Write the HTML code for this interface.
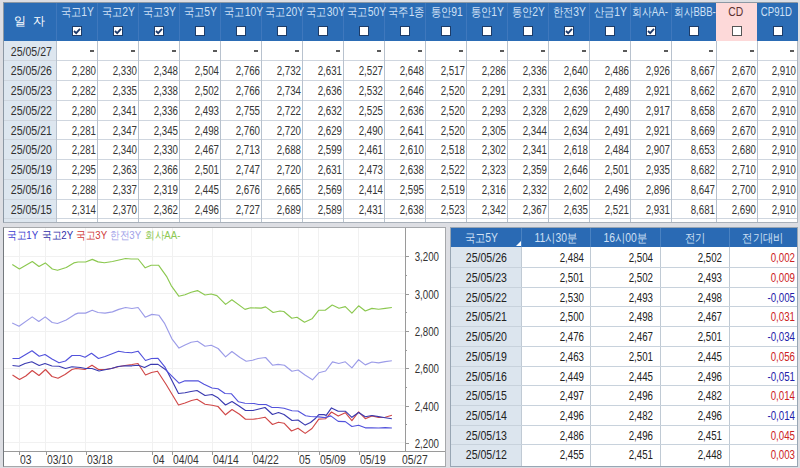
<!DOCTYPE html><html><head><meta charset="utf-8"><style>
*{margin:0;padding:0;box-sizing:border-box}
html,body{width:800px;height:468px;overflow:hidden;background:#dddee3;font-family:"Liberation Sans", sans-serif;position:relative}
.a{position:absolute}
.t{position:absolute;white-space:nowrap;font-size:12px;line-height:14px}
.r{text-align:right}
.c{text-align:center}
.s{display:inline-block;transform:scaleX(0.86)}
.sd{display:inline-block;transform:scaleX(0.88)}
.sr{display:inline-block;transform:scaleX(0.81);transform-origin:100% 50%}
.cb{position:absolute;width:10px;height:10px;background:#fff}

</style></head><body>
<div class="a" style="left:3px;top:2px;width:795px;height:221px;background:#fff;border:1px solid #8c98a4;border-right-color:#b0b8c0;border-bottom-color:#a9b1ba"></div>
<div class="a" style="left:4px;top:3px;width:794px;height:38px;background:#2b6cb5"></div>
<div class="a" style="left:716px;top:3px;width:41px;height:38px;background:#fdd9d9"></div>
<div class="a" style="left:4px;top:41px;width:52px;height:181px;background:#dde6ef"></div>
<div class="a" style="left:56px;top:3px;width:1px;height:38px;background:#3f78bd"></div>
<div class="a" style="left:97px;top:3px;width:1px;height:38px;background:#3f78bd"></div>
<div class="a" style="left:138px;top:3px;width:1px;height:38px;background:#3f78bd"></div>
<div class="a" style="left:179px;top:3px;width:1px;height:38px;background:#3f78bd"></div>
<div class="a" style="left:220px;top:3px;width:1px;height:38px;background:#3f78bd"></div>
<div class="a" style="left:261px;top:3px;width:1px;height:38px;background:#3f78bd"></div>
<div class="a" style="left:302px;top:3px;width:1px;height:38px;background:#3f78bd"></div>
<div class="a" style="left:343px;top:3px;width:1px;height:38px;background:#3f78bd"></div>
<div class="a" style="left:384px;top:3px;width:1px;height:38px;background:#3f78bd"></div>
<div class="a" style="left:425px;top:3px;width:1px;height:38px;background:#3f78bd"></div>
<div class="a" style="left:466px;top:3px;width:1px;height:38px;background:#3f78bd"></div>
<div class="a" style="left:507px;top:3px;width:1px;height:38px;background:#3f78bd"></div>
<div class="a" style="left:548px;top:3px;width:1px;height:38px;background:#3f78bd"></div>
<div class="a" style="left:589px;top:3px;width:1px;height:38px;background:#3f78bd"></div>
<div class="a" style="left:630px;top:3px;width:1px;height:38px;background:#3f78bd"></div>
<div class="a" style="left:671px;top:3px;width:1px;height:38px;background:#3f78bd"></div>
<div class="a" style="left:4px;top:60px;width:793px;height:1px;background:#cfd6df"></div>
<div class="a" style="left:4px;top:80px;width:793px;height:1px;background:#cfd6df"></div>
<div class="a" style="left:4px;top:100px;width:793px;height:1px;background:#cfd6df"></div>
<div class="a" style="left:4px;top:120px;width:793px;height:1px;background:#cfd6df"></div>
<div class="a" style="left:4px;top:139px;width:793px;height:1px;background:#cfd6df"></div>
<div class="a" style="left:4px;top:159px;width:793px;height:1px;background:#cfd6df"></div>
<div class="a" style="left:4px;top:179px;width:793px;height:1px;background:#cfd6df"></div>
<div class="a" style="left:4px;top:199px;width:793px;height:1px;background:#cfd6df"></div>
<div class="a" style="left:4px;top:218px;width:793px;height:1px;background:#cfd6df"></div>
<div class="a" style="left:56px;top:41px;width:1px;height:181px;background:#b8c2ce"></div>
<div class="a" style="left:97px;top:41px;width:1px;height:181px;background:#b8c2ce"></div>
<div class="a" style="left:138px;top:41px;width:1px;height:181px;background:#b8c2ce"></div>
<div class="a" style="left:179px;top:41px;width:1px;height:181px;background:#b8c2ce"></div>
<div class="a" style="left:220px;top:41px;width:1px;height:181px;background:#b8c2ce"></div>
<div class="a" style="left:261px;top:41px;width:1px;height:181px;background:#b8c2ce"></div>
<div class="a" style="left:302px;top:41px;width:1px;height:181px;background:#b8c2ce"></div>
<div class="a" style="left:343px;top:41px;width:1px;height:181px;background:#b8c2ce"></div>
<div class="a" style="left:384px;top:41px;width:1px;height:181px;background:#b8c2ce"></div>
<div class="a" style="left:425px;top:41px;width:1px;height:181px;background:#b8c2ce"></div>
<div class="a" style="left:466px;top:41px;width:1px;height:181px;background:#b8c2ce"></div>
<div class="a" style="left:507px;top:41px;width:1px;height:181px;background:#b8c2ce"></div>
<div class="a" style="left:548px;top:41px;width:1px;height:181px;background:#b8c2ce"></div>
<div class="a" style="left:589px;top:41px;width:1px;height:181px;background:#b8c2ce"></div>
<div class="a" style="left:630px;top:41px;width:1px;height:181px;background:#b8c2ce"></div>
<div class="a" style="left:671px;top:41px;width:1px;height:181px;background:#b8c2ce"></div>
<div class="a" style="left:716px;top:41px;width:1px;height:181px;background:#b8c2ce"></div>
<div class="a" style="left:757px;top:41px;width:1px;height:181px;background:#b8c2ce"></div>
<div class="t c" style="left:3px;top:14px;width:53px;color:#fff">일&nbsp;&nbsp;자</div>
<div class="t c" style="left:57px;top:5px;width:41px;color:#cfe0f5"><span class="s" style="transform:scaleX(0.86)">국고1Y</span></div>
<div class="cb" style="left:72px;top:26px;border:1px solid #1d3c68"></div>
<svg class="a" style="left:72px;top:26px" width="10" height="10" viewBox="0 0 10 10"><path d="M2 5 L4.2 7.2 L8 2.8" fill="none" stroke="#1e3a6a" stroke-width="1.8"/></svg>
<div class="t c" style="left:98px;top:5px;width:41px;color:#cfe0f5"><span class="s" style="transform:scaleX(0.86)">국고2Y</span></div>
<div class="cb" style="left:113px;top:26px;border:1px solid #1d3c68"></div>
<svg class="a" style="left:113px;top:26px" width="10" height="10" viewBox="0 0 10 10"><path d="M2 5 L4.2 7.2 L8 2.8" fill="none" stroke="#1e3a6a" stroke-width="1.8"/></svg>
<div class="t c" style="left:139px;top:5px;width:41px;color:#cfe0f5"><span class="s" style="transform:scaleX(0.86)">국고3Y</span></div>
<div class="cb" style="left:154px;top:26px;border:1px solid #1d3c68"></div>
<svg class="a" style="left:154px;top:26px" width="10" height="10" viewBox="0 0 10 10"><path d="M2 5 L4.2 7.2 L8 2.8" fill="none" stroke="#1e3a6a" stroke-width="1.8"/></svg>
<div class="t c" style="left:180px;top:5px;width:41px;color:#cfe0f5"><span class="s" style="transform:scaleX(0.86)">국고5Y</span></div>
<div class="cb" style="left:195px;top:26px;border:1px solid #1d3c68"></div>
<div class="t c" style="left:221px;top:5px;width:41px;color:#cfe0f5"><span class="s" style="transform:scaleX(0.86)">국고10Y</span></div>
<div class="cb" style="left:236px;top:26px;border:1px solid #1d3c68"></div>
<div class="t c" style="left:262px;top:5px;width:41px;color:#cfe0f5"><span class="s" style="transform:scaleX(0.86)">국고20Y</span></div>
<div class="cb" style="left:277px;top:26px;border:1px solid #1d3c68"></div>
<div class="t c" style="left:303px;top:5px;width:41px;color:#cfe0f5"><span class="s" style="transform:scaleX(0.86)">국고30Y</span></div>
<div class="cb" style="left:318px;top:26px;border:1px solid #1d3c68"></div>
<div class="t c" style="left:344px;top:5px;width:41px;color:#cfe0f5"><span class="s" style="transform:scaleX(0.86)">국고50Y</span></div>
<div class="cb" style="left:359px;top:26px;border:1px solid #1d3c68"></div>
<div class="t c" style="left:385px;top:5px;width:41px;color:#cfe0f5"><span class="s" style="transform:scaleX(0.86)">국주1종</span></div>
<div class="cb" style="left:400px;top:26px;border:1px solid #1d3c68"></div>
<div class="t c" style="left:426px;top:5px;width:41px;color:#cfe0f5"><span class="s" style="transform:scaleX(0.86)">통안91</span></div>
<div class="cb" style="left:441px;top:26px;border:1px solid #1d3c68"></div>
<div class="t c" style="left:467px;top:5px;width:41px;color:#cfe0f5"><span class="s" style="transform:scaleX(0.86)">통안1Y</span></div>
<div class="cb" style="left:482px;top:26px;border:1px solid #1d3c68"></div>
<div class="t c" style="left:508px;top:5px;width:41px;color:#cfe0f5"><span class="s" style="transform:scaleX(0.86)">통안2Y</span></div>
<div class="cb" style="left:523px;top:26px;border:1px solid #1d3c68"></div>
<div class="t c" style="left:549px;top:5px;width:41px;color:#cfe0f5"><span class="s" style="transform:scaleX(0.86)">한전3Y</span></div>
<div class="cb" style="left:564px;top:26px;border:1px solid #1d3c68"></div>
<svg class="a" style="left:564px;top:26px" width="10" height="10" viewBox="0 0 10 10"><path d="M2 5 L4.2 7.2 L8 2.8" fill="none" stroke="#1e3a6a" stroke-width="1.8"/></svg>
<div class="t c" style="left:590px;top:5px;width:41px;color:#cfe0f5"><span class="s" style="transform:scaleX(0.86)">산금1Y</span></div>
<div class="cb" style="left:605px;top:26px;border:1px solid #1d3c68"></div>
<div class="t c" style="left:628px;top:5px;width:41px;color:#cfe0f5"><span class="s" style="transform:scaleX(0.82)">회사AA-</span></div>
<div class="cb" style="left:646px;top:26px;border:1px solid #1d3c68"></div>
<svg class="a" style="left:646px;top:26px" width="10" height="10" viewBox="0 0 10 10"><path d="M2 5 L4.2 7.2 L8 2.8" fill="none" stroke="#1e3a6a" stroke-width="1.8"/></svg>
<div class="t c" style="left:669px;top:5px;width:45px;color:#cfe0f5"><span class="s" style="transform:scaleX(0.8)">회사BBB-</span></div>
<div class="cb" style="left:689px;top:26px;border:1px solid #1d3c68"></div>
<div class="t c" style="left:715px;top:5px;width:41px;color:#5a3030"><span class="s" style="transform:scaleX(0.86)">CD</span></div>
<div class="cb" style="left:732px;top:26px;border:1px solid #555"></div>
<div class="t c" style="left:756px;top:5px;width:40px;color:#cfe0f5"><span class="s" style="transform:scaleX(0.8)">CP91D</span></div>
<div class="cb" style="left:773px;top:26px;border:1px solid #1d3c68"></div>
<div class="t c" style="left:5px;top:44.5px;width:53px;color:#303030"><span class="sd">25/05/27</span></div>
<div class="a" style="left:90px;top:50px;width:4px;height:2px;background:#5a5a5a"></div>
<div class="a" style="left:131px;top:50px;width:4px;height:2px;background:#5a5a5a"></div>
<div class="a" style="left:172px;top:50px;width:4px;height:2px;background:#5a5a5a"></div>
<div class="a" style="left:213px;top:50px;width:4px;height:2px;background:#5a5a5a"></div>
<div class="a" style="left:254px;top:50px;width:4px;height:2px;background:#5a5a5a"></div>
<div class="a" style="left:295px;top:50px;width:4px;height:2px;background:#5a5a5a"></div>
<div class="a" style="left:336px;top:50px;width:4px;height:2px;background:#5a5a5a"></div>
<div class="a" style="left:377px;top:50px;width:4px;height:2px;background:#5a5a5a"></div>
<div class="a" style="left:418px;top:50px;width:4px;height:2px;background:#5a5a5a"></div>
<div class="a" style="left:459px;top:50px;width:4px;height:2px;background:#5a5a5a"></div>
<div class="a" style="left:500px;top:50px;width:4px;height:2px;background:#5a5a5a"></div>
<div class="a" style="left:541px;top:50px;width:4px;height:2px;background:#5a5a5a"></div>
<div class="a" style="left:582px;top:50px;width:4px;height:2px;background:#5a5a5a"></div>
<div class="a" style="left:623px;top:50px;width:4px;height:2px;background:#5a5a5a"></div>
<div class="a" style="left:664px;top:50px;width:4px;height:2px;background:#5a5a5a"></div>
<div class="a" style="left:709px;top:50px;width:4px;height:2px;background:#5a5a5a"></div>
<div class="a" style="left:750px;top:50px;width:4px;height:2px;background:#5a5a5a"></div>
<div class="a" style="left:790px;top:50px;width:4px;height:2px;background:#5a5a5a"></div>
<div class="t c" style="left:5px;top:64.0px;width:53px;color:#303030"><span class="sd">25/05/26</span></div>
<div class="t r" style="left:56px;top:64.0px;width:40px;color:#363636"><span class="sr">2,280</span></div>
<div class="t r" style="left:97px;top:64.0px;width:40px;color:#363636"><span class="sr">2,330</span></div>
<div class="t r" style="left:138px;top:64.0px;width:40px;color:#363636"><span class="sr">2,348</span></div>
<div class="t r" style="left:179px;top:64.0px;width:40px;color:#363636"><span class="sr">2,504</span></div>
<div class="t r" style="left:220px;top:64.0px;width:40px;color:#363636"><span class="sr">2,766</span></div>
<div class="t r" style="left:261px;top:64.0px;width:40px;color:#363636"><span class="sr">2,732</span></div>
<div class="t r" style="left:302px;top:64.0px;width:40px;color:#363636"><span class="sr">2,631</span></div>
<div class="t r" style="left:343px;top:64.0px;width:40px;color:#363636"><span class="sr">2,527</span></div>
<div class="t r" style="left:384px;top:64.0px;width:40px;color:#363636"><span class="sr">2,648</span></div>
<div class="t r" style="left:425px;top:64.0px;width:40px;color:#363636"><span class="sr">2,517</span></div>
<div class="t r" style="left:466px;top:64.0px;width:40px;color:#363636"><span class="sr">2,286</span></div>
<div class="t r" style="left:507px;top:64.0px;width:40px;color:#363636"><span class="sr">2,336</span></div>
<div class="t r" style="left:548px;top:64.0px;width:40px;color:#363636"><span class="sr">2,640</span></div>
<div class="t r" style="left:589px;top:64.0px;width:40px;color:#363636"><span class="sr">2,486</span></div>
<div class="t r" style="left:630px;top:64.0px;width:40px;color:#363636"><span class="sr">2,926</span></div>
<div class="t r" style="left:671px;top:64.0px;width:44px;color:#363636"><span class="sr">8,667</span></div>
<div class="t r" style="left:716px;top:64.0px;width:40px;color:#363636"><span class="sr">2,670</span></div>
<div class="t r" style="left:757px;top:64.0px;width:39px;color:#363636"><span class="sr">2,910</span></div>
<div class="t c" style="left:5px;top:84.0px;width:53px;color:#303030"><span class="sd">25/05/23</span></div>
<div class="t r" style="left:56px;top:84.0px;width:40px;color:#363636"><span class="sr">2,282</span></div>
<div class="t r" style="left:97px;top:84.0px;width:40px;color:#363636"><span class="sr">2,335</span></div>
<div class="t r" style="left:138px;top:84.0px;width:40px;color:#363636"><span class="sr">2,338</span></div>
<div class="t r" style="left:179px;top:84.0px;width:40px;color:#363636"><span class="sr">2,502</span></div>
<div class="t r" style="left:220px;top:84.0px;width:40px;color:#363636"><span class="sr">2,766</span></div>
<div class="t r" style="left:261px;top:84.0px;width:40px;color:#363636"><span class="sr">2,734</span></div>
<div class="t r" style="left:302px;top:84.0px;width:40px;color:#363636"><span class="sr">2,636</span></div>
<div class="t r" style="left:343px;top:84.0px;width:40px;color:#363636"><span class="sr">2,532</span></div>
<div class="t r" style="left:384px;top:84.0px;width:40px;color:#363636"><span class="sr">2,646</span></div>
<div class="t r" style="left:425px;top:84.0px;width:40px;color:#363636"><span class="sr">2,520</span></div>
<div class="t r" style="left:466px;top:84.0px;width:40px;color:#363636"><span class="sr">2,291</span></div>
<div class="t r" style="left:507px;top:84.0px;width:40px;color:#363636"><span class="sr">2,331</span></div>
<div class="t r" style="left:548px;top:84.0px;width:40px;color:#363636"><span class="sr">2,636</span></div>
<div class="t r" style="left:589px;top:84.0px;width:40px;color:#363636"><span class="sr">2,489</span></div>
<div class="t r" style="left:630px;top:84.0px;width:40px;color:#363636"><span class="sr">2,921</span></div>
<div class="t r" style="left:671px;top:84.0px;width:44px;color:#363636"><span class="sr">8,662</span></div>
<div class="t r" style="left:716px;top:84.0px;width:40px;color:#363636"><span class="sr">2,670</span></div>
<div class="t r" style="left:757px;top:84.0px;width:39px;color:#363636"><span class="sr">2,910</span></div>
<div class="t c" style="left:5px;top:104.0px;width:53px;color:#303030"><span class="sd">25/05/22</span></div>
<div class="t r" style="left:56px;top:104.0px;width:40px;color:#363636"><span class="sr">2,280</span></div>
<div class="t r" style="left:97px;top:104.0px;width:40px;color:#363636"><span class="sr">2,341</span></div>
<div class="t r" style="left:138px;top:104.0px;width:40px;color:#363636"><span class="sr">2,336</span></div>
<div class="t r" style="left:179px;top:104.0px;width:40px;color:#363636"><span class="sr">2,493</span></div>
<div class="t r" style="left:220px;top:104.0px;width:40px;color:#363636"><span class="sr">2,755</span></div>
<div class="t r" style="left:261px;top:104.0px;width:40px;color:#363636"><span class="sr">2,722</span></div>
<div class="t r" style="left:302px;top:104.0px;width:40px;color:#363636"><span class="sr">2,632</span></div>
<div class="t r" style="left:343px;top:104.0px;width:40px;color:#363636"><span class="sr">2,525</span></div>
<div class="t r" style="left:384px;top:104.0px;width:40px;color:#363636"><span class="sr">2,636</span></div>
<div class="t r" style="left:425px;top:104.0px;width:40px;color:#363636"><span class="sr">2,520</span></div>
<div class="t r" style="left:466px;top:104.0px;width:40px;color:#363636"><span class="sr">2,293</span></div>
<div class="t r" style="left:507px;top:104.0px;width:40px;color:#363636"><span class="sr">2,328</span></div>
<div class="t r" style="left:548px;top:104.0px;width:40px;color:#363636"><span class="sr">2,629</span></div>
<div class="t r" style="left:589px;top:104.0px;width:40px;color:#363636"><span class="sr">2,490</span></div>
<div class="t r" style="left:630px;top:104.0px;width:40px;color:#363636"><span class="sr">2,917</span></div>
<div class="t r" style="left:671px;top:104.0px;width:44px;color:#363636"><span class="sr">8,658</span></div>
<div class="t r" style="left:716px;top:104.0px;width:40px;color:#363636"><span class="sr">2,670</span></div>
<div class="t r" style="left:757px;top:104.0px;width:39px;color:#363636"><span class="sr">2,910</span></div>
<div class="t c" style="left:5px;top:123.5px;width:53px;color:#303030"><span class="sd">25/05/21</span></div>
<div class="t r" style="left:56px;top:123.5px;width:40px;color:#363636"><span class="sr">2,281</span></div>
<div class="t r" style="left:97px;top:123.5px;width:40px;color:#363636"><span class="sr">2,347</span></div>
<div class="t r" style="left:138px;top:123.5px;width:40px;color:#363636"><span class="sr">2,345</span></div>
<div class="t r" style="left:179px;top:123.5px;width:40px;color:#363636"><span class="sr">2,498</span></div>
<div class="t r" style="left:220px;top:123.5px;width:40px;color:#363636"><span class="sr">2,760</span></div>
<div class="t r" style="left:261px;top:123.5px;width:40px;color:#363636"><span class="sr">2,720</span></div>
<div class="t r" style="left:302px;top:123.5px;width:40px;color:#363636"><span class="sr">2,629</span></div>
<div class="t r" style="left:343px;top:123.5px;width:40px;color:#363636"><span class="sr">2,490</span></div>
<div class="t r" style="left:384px;top:123.5px;width:40px;color:#363636"><span class="sr">2,641</span></div>
<div class="t r" style="left:425px;top:123.5px;width:40px;color:#363636"><span class="sr">2,520</span></div>
<div class="t r" style="left:466px;top:123.5px;width:40px;color:#363636"><span class="sr">2,305</span></div>
<div class="t r" style="left:507px;top:123.5px;width:40px;color:#363636"><span class="sr">2,344</span></div>
<div class="t r" style="left:548px;top:123.5px;width:40px;color:#363636"><span class="sr">2,634</span></div>
<div class="t r" style="left:589px;top:123.5px;width:40px;color:#363636"><span class="sr">2,491</span></div>
<div class="t r" style="left:630px;top:123.5px;width:40px;color:#363636"><span class="sr">2,921</span></div>
<div class="t r" style="left:671px;top:123.5px;width:44px;color:#363636"><span class="sr">8,669</span></div>
<div class="t r" style="left:716px;top:123.5px;width:40px;color:#363636"><span class="sr">2,670</span></div>
<div class="t r" style="left:757px;top:123.5px;width:39px;color:#363636"><span class="sr">2,910</span></div>
<div class="t c" style="left:5px;top:143.0px;width:53px;color:#303030"><span class="sd">25/05/20</span></div>
<div class="t r" style="left:56px;top:143.0px;width:40px;color:#363636"><span class="sr">2,281</span></div>
<div class="t r" style="left:97px;top:143.0px;width:40px;color:#363636"><span class="sr">2,340</span></div>
<div class="t r" style="left:138px;top:143.0px;width:40px;color:#363636"><span class="sr">2,330</span></div>
<div class="t r" style="left:179px;top:143.0px;width:40px;color:#363636"><span class="sr">2,467</span></div>
<div class="t r" style="left:220px;top:143.0px;width:40px;color:#363636"><span class="sr">2,713</span></div>
<div class="t r" style="left:261px;top:143.0px;width:40px;color:#363636"><span class="sr">2,688</span></div>
<div class="t r" style="left:302px;top:143.0px;width:40px;color:#363636"><span class="sr">2,599</span></div>
<div class="t r" style="left:343px;top:143.0px;width:40px;color:#363636"><span class="sr">2,461</span></div>
<div class="t r" style="left:384px;top:143.0px;width:40px;color:#363636"><span class="sr">2,610</span></div>
<div class="t r" style="left:425px;top:143.0px;width:40px;color:#363636"><span class="sr">2,518</span></div>
<div class="t r" style="left:466px;top:143.0px;width:40px;color:#363636"><span class="sr">2,302</span></div>
<div class="t r" style="left:507px;top:143.0px;width:40px;color:#363636"><span class="sr">2,341</span></div>
<div class="t r" style="left:548px;top:143.0px;width:40px;color:#363636"><span class="sr">2,618</span></div>
<div class="t r" style="left:589px;top:143.0px;width:40px;color:#363636"><span class="sr">2,484</span></div>
<div class="t r" style="left:630px;top:143.0px;width:40px;color:#363636"><span class="sr">2,907</span></div>
<div class="t r" style="left:671px;top:143.0px;width:44px;color:#363636"><span class="sr">8,653</span></div>
<div class="t r" style="left:716px;top:143.0px;width:40px;color:#363636"><span class="sr">2,680</span></div>
<div class="t r" style="left:757px;top:143.0px;width:39px;color:#363636"><span class="sr">2,910</span></div>
<div class="t c" style="left:5px;top:163.0px;width:53px;color:#303030"><span class="sd">25/05/19</span></div>
<div class="t r" style="left:56px;top:163.0px;width:40px;color:#363636"><span class="sr">2,295</span></div>
<div class="t r" style="left:97px;top:163.0px;width:40px;color:#363636"><span class="sr">2,363</span></div>
<div class="t r" style="left:138px;top:163.0px;width:40px;color:#363636"><span class="sr">2,366</span></div>
<div class="t r" style="left:179px;top:163.0px;width:40px;color:#363636"><span class="sr">2,501</span></div>
<div class="t r" style="left:220px;top:163.0px;width:40px;color:#363636"><span class="sr">2,747</span></div>
<div class="t r" style="left:261px;top:163.0px;width:40px;color:#363636"><span class="sr">2,720</span></div>
<div class="t r" style="left:302px;top:163.0px;width:40px;color:#363636"><span class="sr">2,631</span></div>
<div class="t r" style="left:343px;top:163.0px;width:40px;color:#363636"><span class="sr">2,473</span></div>
<div class="t r" style="left:384px;top:163.0px;width:40px;color:#363636"><span class="sr">2,638</span></div>
<div class="t r" style="left:425px;top:163.0px;width:40px;color:#363636"><span class="sr">2,522</span></div>
<div class="t r" style="left:466px;top:163.0px;width:40px;color:#363636"><span class="sr">2,323</span></div>
<div class="t r" style="left:507px;top:163.0px;width:40px;color:#363636"><span class="sr">2,359</span></div>
<div class="t r" style="left:548px;top:163.0px;width:40px;color:#363636"><span class="sr">2,646</span></div>
<div class="t r" style="left:589px;top:163.0px;width:40px;color:#363636"><span class="sr">2,501</span></div>
<div class="t r" style="left:630px;top:163.0px;width:40px;color:#363636"><span class="sr">2,935</span></div>
<div class="t r" style="left:671px;top:163.0px;width:44px;color:#363636"><span class="sr">8,682</span></div>
<div class="t r" style="left:716px;top:163.0px;width:40px;color:#363636"><span class="sr">2,710</span></div>
<div class="t r" style="left:757px;top:163.0px;width:39px;color:#363636"><span class="sr">2,910</span></div>
<div class="t c" style="left:5px;top:183.0px;width:53px;color:#303030"><span class="sd">25/05/16</span></div>
<div class="t r" style="left:56px;top:183.0px;width:40px;color:#363636"><span class="sr">2,288</span></div>
<div class="t r" style="left:97px;top:183.0px;width:40px;color:#363636"><span class="sr">2,337</span></div>
<div class="t r" style="left:138px;top:183.0px;width:40px;color:#363636"><span class="sr">2,319</span></div>
<div class="t r" style="left:179px;top:183.0px;width:40px;color:#363636"><span class="sr">2,445</span></div>
<div class="t r" style="left:220px;top:183.0px;width:40px;color:#363636"><span class="sr">2,676</span></div>
<div class="t r" style="left:261px;top:183.0px;width:40px;color:#363636"><span class="sr">2,665</span></div>
<div class="t r" style="left:302px;top:183.0px;width:40px;color:#363636"><span class="sr">2,569</span></div>
<div class="t r" style="left:343px;top:183.0px;width:40px;color:#363636"><span class="sr">2,414</span></div>
<div class="t r" style="left:384px;top:183.0px;width:40px;color:#363636"><span class="sr">2,595</span></div>
<div class="t r" style="left:425px;top:183.0px;width:40px;color:#363636"><span class="sr">2,519</span></div>
<div class="t r" style="left:466px;top:183.0px;width:40px;color:#363636"><span class="sr">2,316</span></div>
<div class="t r" style="left:507px;top:183.0px;width:40px;color:#363636"><span class="sr">2,332</span></div>
<div class="t r" style="left:548px;top:183.0px;width:40px;color:#363636"><span class="sr">2,602</span></div>
<div class="t r" style="left:589px;top:183.0px;width:40px;color:#363636"><span class="sr">2,496</span></div>
<div class="t r" style="left:630px;top:183.0px;width:40px;color:#363636"><span class="sr">2,896</span></div>
<div class="t r" style="left:671px;top:183.0px;width:44px;color:#363636"><span class="sr">8,647</span></div>
<div class="t r" style="left:716px;top:183.0px;width:40px;color:#363636"><span class="sr">2,700</span></div>
<div class="t r" style="left:757px;top:183.0px;width:39px;color:#363636"><span class="sr">2,910</span></div>
<div class="t c" style="left:5px;top:202.5px;width:53px;color:#303030"><span class="sd">25/05/15</span></div>
<div class="t r" style="left:56px;top:202.5px;width:40px;color:#363636"><span class="sr">2,314</span></div>
<div class="t r" style="left:97px;top:202.5px;width:40px;color:#363636"><span class="sr">2,370</span></div>
<div class="t r" style="left:138px;top:202.5px;width:40px;color:#363636"><span class="sr">2,362</span></div>
<div class="t r" style="left:179px;top:202.5px;width:40px;color:#363636"><span class="sr">2,496</span></div>
<div class="t r" style="left:220px;top:202.5px;width:40px;color:#363636"><span class="sr">2,727</span></div>
<div class="t r" style="left:261px;top:202.5px;width:40px;color:#363636"><span class="sr">2,689</span></div>
<div class="t r" style="left:302px;top:202.5px;width:40px;color:#363636"><span class="sr">2,589</span></div>
<div class="t r" style="left:343px;top:202.5px;width:40px;color:#363636"><span class="sr">2,431</span></div>
<div class="t r" style="left:384px;top:202.5px;width:40px;color:#363636"><span class="sr">2,638</span></div>
<div class="t r" style="left:425px;top:202.5px;width:40px;color:#363636"><span class="sr">2,523</span></div>
<div class="t r" style="left:466px;top:202.5px;width:40px;color:#363636"><span class="sr">2,342</span></div>
<div class="t r" style="left:507px;top:202.5px;width:40px;color:#363636"><span class="sr">2,367</span></div>
<div class="t r" style="left:548px;top:202.5px;width:40px;color:#363636"><span class="sr">2,635</span></div>
<div class="t r" style="left:589px;top:202.5px;width:40px;color:#363636"><span class="sr">2,521</span></div>
<div class="t r" style="left:630px;top:202.5px;width:40px;color:#363636"><span class="sr">2,931</span></div>
<div class="t r" style="left:671px;top:202.5px;width:44px;color:#363636"><span class="sr">8,681</span></div>
<div class="t r" style="left:716px;top:202.5px;width:40px;color:#363636"><span class="sr">2,690</span></div>
<div class="t r" style="left:757px;top:202.5px;width:39px;color:#363636"><span class="sr">2,910</span></div>
<div class="a" style="left:3px;top:227px;width:443px;height:240px;background:#fff;border:1px solid #a6a8ab;border-left-color:#74797e"></div>
<svg class="a" style="left:0;top:0" width="800" height="468" viewBox="0 0 800 468">
<defs><clipPath id="pc"><rect x="4" y="228" width="401.5" height="223.5"/></clipPath></defs>
<g stroke="#f1f1f1" stroke-width="1" shape-rendering="crispEdges"><line x1="19.4" y1="228" x2="19.4" y2="451.5"/><line x1="45.6" y1="228" x2="45.6" y2="451.5"/><line x1="85.6" y1="228" x2="85.6" y2="451.5"/><line x1="152.2" y1="228" x2="152.2" y2="451.5"/><line x1="172.5" y1="228" x2="172.5" y2="451.5"/><line x1="212.5" y1="228" x2="212.5" y2="451.5"/><line x1="251.8" y1="228" x2="251.8" y2="451.5"/><line x1="298.5" y1="228" x2="298.5" y2="451.5"/><line x1="318.7" y1="228" x2="318.7" y2="451.5"/><line x1="358.8" y1="228" x2="358.8" y2="451.5"/><line x1="4" y1="256.4" x2="405.5" y2="256.4"/><line x1="4" y1="293.7" x2="405.5" y2="293.7"/><line x1="4" y1="331.0" x2="405.5" y2="331.0"/><line x1="4" y1="368.3" x2="405.5" y2="368.3"/><line x1="4" y1="405.6" x2="405.5" y2="405.6"/><line x1="4" y1="442.9" x2="405.5" y2="442.9"/></g>
<g clip-path="url(#pc)" fill="none" stroke-width="1.15" stroke-linejoin="round">
<polyline stroke="#8cc850" points="12.3,264.4 19.4,269.0 32.3,261.5 39.0,266.5 45.3,262.9 52.3,269.0 57.5,270.3 66.3,267.5 73.8,262.9 78.0,262.0 85.6,262.0 92.3,259.4 98.1,261.9 104.4,262.8 112.5,261.5 125.6,258.5 131.2,259.0 138.1,259.0 145.2,267.8 151.2,265.2 158.5,265.2 166.9,276.9 171.2,285.6 178.8,296.2 185.0,294.8 191.2,292.2 197.5,290.6 205.0,295.0 211.2,294.0 216.9,295.6 225.6,304.4 231.9,299.8 245.0,309.4 250.6,307.8 261.2,308.1 265.6,306.9 273.1,312.5 280.0,311.0 283.8,311.5 291.8,318.2 297.0,317.3 304.5,322.2 312.0,318.8 318.8,310.2 325.2,310.2 332.2,305.0 339.0,308.3 345.3,306.6 351.9,313.1 358.6,305.8 365.3,311.0 371.9,308.4 378.6,309.2 385.2,308.4 391.9,307.5"/>
<polyline stroke="#9c9ce8" points="12.2,323.1 19.0,326.2 32.2,316.9 38.8,321.5 45.2,316.9 52.2,322.5 57.5,323.5 66.2,320.0 74.8,314.4 78.1,313.1 85.6,313.1 92.2,310.2 98.1,312.5 105.0,313.1 112.5,311.9 118.8,309.4 125.6,307.5 131.9,308.5 138.1,307.5 145.2,317.2 151.9,314.4 158.8,315.2 164.4,323.1 171.9,338.8 179.0,348.1 185.0,345.0 191.2,342.2 197.5,341.2 205.0,346.2 211.2,345.2 218.1,348.5 225.6,356.9 231.9,351.5 240.0,357.5 246.2,361.2 252.5,360.2 258.1,358.5 265.6,357.5 272.5,365.2 278.1,364.4 284.4,365.2 291.9,371.2 298.1,370.0 305.0,375.0 312.5,379.8 318.8,372.8 325.6,371.0 332.5,361.9 338.8,363.5 345.3,361.8 351.9,367.9 358.6,359.7 365.3,364.9 371.9,362.0 378.6,362.9 385.2,361.6 391.9,360.8"/>
<polyline stroke="#d04848" points="12.5,375.0 19.5,379.5 25.8,376.0 32.2,370.5 39.0,375.5 45.5,369.5 52.0,376.5 58.0,378.2 65.0,374.5 72.0,369.5 76.0,368.5 85.0,369.5 92.0,365.2 98.5,369.5 105.0,369.5 111.5,368.5 118.0,366.8 125.0,365.5 132.0,364.5 138.0,363.5 145.5,375.0 151.5,372.5 157.5,371.2 166.0,384.2 178.5,405.0 185.0,403.0 191.5,400.5 197.0,399.2 205.0,404.2 212.0,405.2 218.0,406.5 225.5,414.8 232.0,409.5 239.5,414.2 245.5,419.2 253.0,419.2 258.5,418.5 265.0,417.2 272.5,424.5 278.5,422.2 284.0,423.2 291.5,431.0 298.0,428.2 305.2,433.4 312.0,428.5 318.8,419.1 325.5,418.8 331.5,412.0 338.2,416.1 345.3,412.7 351.9,420.7 358.6,411.9 365.3,418.7 371.9,415.9 378.6,417.5 385.2,417.2 391.9,415.3"/>
<polyline stroke="#3a3ab0" points="12.5,365.5 19.0,366.2 25.0,363.5 31.8,361.8 39.2,365.5 45.0,363.5 52.0,366.0 59.0,366.2 65.5,368.5 72.0,366.8 80.5,367.5 85.5,368.5 92.0,368.5 99.0,371.0 105.0,369.8 111.5,368.5 118.0,366.5 125.0,365.8 132.0,365.8 138.5,365.2 144.5,367.5 151.0,364.2 158.0,364.4 165.0,369.2 167.2,371.3 178.5,393.5 185.0,392.8 191.0,391.5 197.0,390.5 205.0,395.5 212.0,394.5 218.0,397.8 225.5,405.0 232.0,401.5 239.0,406.0 245.5,410.5 253.0,410.5 258.0,409.2 265.0,407.5 272.5,414.5 278.5,412.5 284.0,414.5 292.0,420.5 298.0,420.0 305.2,425.1 310.5,422.5 315.0,418.8 318.8,414.6 324.0,414.6 326.2,415.4 331.5,407.9 338.2,411.2 345.3,411.2 351.9,417.3 358.6,412.5 365.3,416.8 371.9,415.5 378.6,416.6 385.2,417.7 391.9,418.7"/>
<polyline stroke="#5252dc" points="12.5,358.5 19.0,358.5 32.0,350.8 39.2,356.2 45.0,354.5 52.0,359.0 59.0,362.8 65.5,361.0 72.0,355.5 80.0,355.5 85.0,357.2 91.5,353.3 98.5,358.5 105.0,356.5 111.5,354.0 118.5,351.2 124.5,352.2 131.5,352.8 138.0,351.2 145.5,360.5 151.5,358.5 158.0,358.3 165.0,367.1 167.2,371.3 171.4,375.6 179.0,383.2 185.0,380.8 198.0,380.8 204.0,384.2 212.0,388.0 218.0,388.8 225.0,393.5 231.5,393.8 238.5,401.8 245.0,403.2 254.0,403.5 258.5,404.5 266.0,404.5 272.0,407.5 278.0,407.5 284.0,408.2 292.0,410.8 298.0,411.0 305.6,415.8 310.5,416.5 318.8,416.9 324.8,417.6 330.8,415.9 338.2,421.4 345.3,421.6 351.9,426.5 358.6,425.2 365.3,427.8 371.9,427.8 378.6,428.0 385.2,427.6 391.9,428.0"/>
</g>
<g stroke="#9a9a9a" stroke-width="1" shape-rendering="crispEdges">
<line x1="405.5" y1="228" x2="405.5" y2="452"/>
<line x1="4" y1="451.5" x2="445" y2="451.5"/>
<line x1="405" y1="256.5" x2="409" y2="256.5"/>
<line x1="405" y1="294.5" x2="409" y2="294.5"/>
<line x1="405" y1="331.5" x2="409" y2="331.5"/>
<line x1="405" y1="368.5" x2="409" y2="368.5"/>
<line x1="405" y1="406.5" x2="409" y2="406.5"/>
<line x1="405" y1="443.5" x2="409" y2="443.5"/>
<line x1="405" y1="275.5" x2="407" y2="275.5"/>
<line x1="405" y1="312.5" x2="407" y2="312.5"/>
<line x1="405" y1="350.5" x2="407" y2="350.5"/>
<line x1="405" y1="387.5" x2="407" y2="387.5"/>
<line x1="405" y1="424.5" x2="407" y2="424.5"/>
<line x1="19.5" y1="451" x2="19.5" y2="455"/>
<line x1="46.5" y1="451" x2="46.5" y2="455"/>
<line x1="86.5" y1="451" x2="86.5" y2="455"/>
<line x1="152.5" y1="451" x2="152.5" y2="455"/>
<line x1="172.5" y1="451" x2="172.5" y2="455"/>
<line x1="212.5" y1="451" x2="212.5" y2="455"/>
<line x1="252.5" y1="451" x2="252.5" y2="455"/>
<line x1="298.5" y1="451" x2="298.5" y2="455"/>
<line x1="319.5" y1="451" x2="319.5" y2="455"/>
<line x1="359.5" y1="451" x2="359.5" y2="455"/>
</g></svg>
<div class="t" style="left:7px;top:228px;color:#3c3cd0;font-size:11px;transform:scaleX(0.88);transform-origin:0 0">국고1Y</div>
<div class="t" style="left:42px;top:228px;color:#3030a8;font-size:11px;transform:scaleX(0.88);transform-origin:0 0">국고2Y</div>
<div class="t" style="left:76px;top:228px;color:#d03a3a;font-size:11px;transform:scaleX(0.88);transform-origin:0 0">국고3Y</div>
<div class="t" style="left:110px;top:228px;color:#a0a0e8;font-size:11px;transform:scaleX(0.88);transform-origin:0 0">한전3Y</div>
<div class="t" style="left:145px;top:228px;color:#8cc850;font-size:11px;transform:scaleX(0.88);transform-origin:0 0">회사AA-</div>
<div class="t r" style="left:400px;top:250.4px;width:39px;color:#333"><span class="sr">3,200</span></div>
<div class="t r" style="left:400px;top:287.7px;width:39px;color:#333"><span class="sr">3,000</span></div>
<div class="t r" style="left:400px;top:325.0px;width:39px;color:#333"><span class="sr">2,800</span></div>
<div class="t r" style="left:400px;top:362.3px;width:39px;color:#333"><span class="sr">2,600</span></div>
<div class="t r" style="left:400px;top:399.6px;width:39px;color:#333"><span class="sr">2,400</span></div>
<div class="t r" style="left:400px;top:436.9px;width:39px;color:#333"><span class="sr">2,200</span></div>
<div class="t" style="left:20px;top:453px;color:#333;transform:scaleX(0.86);transform-origin:0 0">03</div>
<div class="t" style="left:47px;top:453px;color:#333;transform:scaleX(0.86);transform-origin:0 0">03/10</div>
<div class="t" style="left:87px;top:453px;color:#333;transform:scaleX(0.86);transform-origin:0 0">03/18</div>
<div class="t" style="left:153px;top:453px;color:#333;transform:scaleX(0.86);transform-origin:0 0">04</div>
<div class="t" style="left:173px;top:453px;color:#333;transform:scaleX(0.86);transform-origin:0 0">04/04</div>
<div class="t" style="left:213px;top:453px;color:#333;transform:scaleX(0.86);transform-origin:0 0">04/14</div>
<div class="t" style="left:253px;top:453px;color:#333;transform:scaleX(0.86);transform-origin:0 0">04/22</div>
<div class="t" style="left:299px;top:453px;color:#333;transform:scaleX(0.86);transform-origin:0 0">05</div>
<div class="t" style="left:320px;top:453px;color:#333;transform:scaleX(0.86);transform-origin:0 0">05/09</div>
<div class="t" style="left:360px;top:453px;color:#333;transform:scaleX(0.86);transform-origin:0 0">05/19</div>
<div class="t" style="left:402px;top:453px;color:#333;transform:scaleX(0.86);transform-origin:0 0">05/27</div>
<div class="a" style="left:450px;top:227px;width:348px;height:240px;background:#fff;border:1px solid #98a6b4"></div>
<div class="a" style="left:451px;top:228px;width:346px;height:19px;background:#2a6ab4"></div>
<div class="a" style="left:451px;top:247px;width:70px;height:219px;background:#dce5ee"></div>
<div class="a" style="left:521px;top:228px;width:1px;height:19px;background:#4a82c2"></div>
<div class="a" style="left:521px;top:247px;width:1px;height:219px;background:#c0cad4"></div>
<div class="a" style="left:590px;top:228px;width:1px;height:19px;background:#4a82c2"></div>
<div class="a" style="left:590px;top:247px;width:1px;height:219px;background:#c0cad4"></div>
<div class="a" style="left:660px;top:228px;width:1px;height:19px;background:#4a82c2"></div>
<div class="a" style="left:660px;top:247px;width:1px;height:219px;background:#c0cad4"></div>
<div class="a" style="left:729px;top:228px;width:1px;height:19px;background:#4a82c2"></div>
<div class="a" style="left:729px;top:247px;width:1px;height:219px;background:#c0cad4"></div>
<div class="a" style="left:451px;top:267px;width:346px;height:1px;background:#c8d2dc"></div>
<div class="a" style="left:451px;top:287px;width:346px;height:1px;background:#c8d2dc"></div>
<div class="a" style="left:451px;top:306px;width:346px;height:1px;background:#c8d2dc"></div>
<div class="a" style="left:451px;top:326px;width:346px;height:1px;background:#c8d2dc"></div>
<div class="a" style="left:451px;top:346px;width:346px;height:1px;background:#c8d2dc"></div>
<div class="a" style="left:451px;top:366px;width:346px;height:1px;background:#c8d2dc"></div>
<div class="a" style="left:451px;top:385px;width:346px;height:1px;background:#c8d2dc"></div>
<div class="a" style="left:451px;top:405px;width:346px;height:1px;background:#c8d2dc"></div>
<div class="a" style="left:451px;top:425px;width:346px;height:1px;background:#c8d2dc"></div>
<div class="a" style="left:451px;top:444px;width:346px;height:1px;background:#c8d2dc"></div>
<div class="t c" style="left:446px;top:231px;width:70px;color:#cfe0f5"><span class="s">국고5Y</span></div>
<div class="t c" style="left:521px;top:231px;width:69px;color:#cfe0f5"><span class="s">11시30분</span></div>
<div class="t c" style="left:590px;top:231px;width:70px;color:#cfe0f5"><span class="s">16시00분</span></div>
<div class="t c" style="left:660px;top:231px;width:69px;color:#cfe0f5"><span class="s">전기</span></div>
<div class="t c" style="left:729px;top:231px;width:68px;color:#cfe0f5"><span class="s">전기대비</span></div>
<svg class="a" style="left:516px;top:241px" width="5" height="5"><path d="M5 0 L5 5 L0 5 Z" fill="#fff"/></svg>
<div class="t c" style="left:451px;top:251.0px;width:70px;color:#222"><span class="sd">25/05/26</span></div>
<div class="t r" style="left:521px;top:251.0px;width:63.5px;color:#222"><span class="sr">2,484</span></div>
<div class="t r" style="left:590px;top:251.0px;width:63.5px;color:#222"><span class="sr">2,504</span></div>
<div class="t r" style="left:660px;top:251.0px;width:62.5px;color:#222"><span class="sr">2,502</span></div>
<div class="t r" style="left:729px;top:251.0px;width:66.5px;color:#cc2222"><span class="sr">0,002</span></div>
<div class="t c" style="left:451px;top:271.0px;width:70px;color:#222"><span class="sd">25/05/23</span></div>
<div class="t r" style="left:521px;top:271.0px;width:63.5px;color:#222"><span class="sr">2,501</span></div>
<div class="t r" style="left:590px;top:271.0px;width:63.5px;color:#222"><span class="sr">2,502</span></div>
<div class="t r" style="left:660px;top:271.0px;width:62.5px;color:#222"><span class="sr">2,493</span></div>
<div class="t r" style="left:729px;top:271.0px;width:66.5px;color:#cc2222"><span class="sr">0,009</span></div>
<div class="t c" style="left:451px;top:290.5px;width:70px;color:#222"><span class="sd">25/05/22</span></div>
<div class="t r" style="left:521px;top:290.5px;width:63.5px;color:#222"><span class="sr">2,530</span></div>
<div class="t r" style="left:590px;top:290.5px;width:63.5px;color:#222"><span class="sr">2,493</span></div>
<div class="t r" style="left:660px;top:290.5px;width:62.5px;color:#222"><span class="sr">2,498</span></div>
<div class="t r" style="left:729px;top:290.5px;width:66.5px;color:#2222aa"><span class="sr">-0,005</span></div>
<div class="t c" style="left:451px;top:310.0px;width:70px;color:#222"><span class="sd">25/05/21</span></div>
<div class="t r" style="left:521px;top:310.0px;width:63.5px;color:#222"><span class="sr">2,500</span></div>
<div class="t r" style="left:590px;top:310.0px;width:63.5px;color:#222"><span class="sr">2,498</span></div>
<div class="t r" style="left:660px;top:310.0px;width:62.5px;color:#222"><span class="sr">2,467</span></div>
<div class="t r" style="left:729px;top:310.0px;width:66.5px;color:#cc2222"><span class="sr">0,031</span></div>
<div class="t c" style="left:451px;top:330.0px;width:70px;color:#222"><span class="sd">25/05/20</span></div>
<div class="t r" style="left:521px;top:330.0px;width:63.5px;color:#222"><span class="sr">2,476</span></div>
<div class="t r" style="left:590px;top:330.0px;width:63.5px;color:#222"><span class="sr">2,467</span></div>
<div class="t r" style="left:660px;top:330.0px;width:62.5px;color:#222"><span class="sr">2,501</span></div>
<div class="t r" style="left:729px;top:330.0px;width:66.5px;color:#2222aa"><span class="sr">-0,034</span></div>
<div class="t c" style="left:451px;top:350.0px;width:70px;color:#222"><span class="sd">25/05/19</span></div>
<div class="t r" style="left:521px;top:350.0px;width:63.5px;color:#222"><span class="sr">2,463</span></div>
<div class="t r" style="left:590px;top:350.0px;width:63.5px;color:#222"><span class="sr">2,501</span></div>
<div class="t r" style="left:660px;top:350.0px;width:62.5px;color:#222"><span class="sr">2,445</span></div>
<div class="t r" style="left:729px;top:350.0px;width:66.5px;color:#cc2222"><span class="sr">0,056</span></div>
<div class="t c" style="left:451px;top:369.5px;width:70px;color:#222"><span class="sd">25/05/16</span></div>
<div class="t r" style="left:521px;top:369.5px;width:63.5px;color:#222"><span class="sr">2,449</span></div>
<div class="t r" style="left:590px;top:369.5px;width:63.5px;color:#222"><span class="sr">2,445</span></div>
<div class="t r" style="left:660px;top:369.5px;width:62.5px;color:#222"><span class="sr">2,496</span></div>
<div class="t r" style="left:729px;top:369.5px;width:66.5px;color:#2222aa"><span class="sr">-0,051</span></div>
<div class="t c" style="left:451px;top:389.0px;width:70px;color:#222"><span class="sd">25/05/15</span></div>
<div class="t r" style="left:521px;top:389.0px;width:63.5px;color:#222"><span class="sr">2,497</span></div>
<div class="t r" style="left:590px;top:389.0px;width:63.5px;color:#222"><span class="sr">2,496</span></div>
<div class="t r" style="left:660px;top:389.0px;width:62.5px;color:#222"><span class="sr">2,482</span></div>
<div class="t r" style="left:729px;top:389.0px;width:66.5px;color:#cc2222"><span class="sr">0,014</span></div>
<div class="t c" style="left:451px;top:409.0px;width:70px;color:#222"><span class="sd">25/05/14</span></div>
<div class="t r" style="left:521px;top:409.0px;width:63.5px;color:#222"><span class="sr">2,496</span></div>
<div class="t r" style="left:590px;top:409.0px;width:63.5px;color:#222"><span class="sr">2,482</span></div>
<div class="t r" style="left:660px;top:409.0px;width:62.5px;color:#222"><span class="sr">2,496</span></div>
<div class="t r" style="left:729px;top:409.0px;width:66.5px;color:#2222aa"><span class="sr">-0,014</span></div>
<div class="t c" style="left:451px;top:428.5px;width:70px;color:#222"><span class="sd">25/05/13</span></div>
<div class="t r" style="left:521px;top:428.5px;width:63.5px;color:#222"><span class="sr">2,486</span></div>
<div class="t r" style="left:590px;top:428.5px;width:63.5px;color:#222"><span class="sr">2,496</span></div>
<div class="t r" style="left:660px;top:428.5px;width:62.5px;color:#222"><span class="sr">2,451</span></div>
<div class="t r" style="left:729px;top:428.5px;width:66.5px;color:#cc2222"><span class="sr">0,045</span></div>
<div class="t c" style="left:451px;top:448.0px;width:70px;color:#222"><span class="sd">25/05/12</span></div>
<div class="t r" style="left:521px;top:448.0px;width:63.5px;color:#222"><span class="sr">2,455</span></div>
<div class="t r" style="left:590px;top:448.0px;width:63.5px;color:#222"><span class="sr">2,451</span></div>
<div class="t r" style="left:660px;top:448.0px;width:62.5px;color:#222"><span class="sr">2,448</span></div>
<div class="t r" style="left:729px;top:448.0px;width:66.5px;color:#cc2222"><span class="sr">0,003</span></div>
</body></html>
